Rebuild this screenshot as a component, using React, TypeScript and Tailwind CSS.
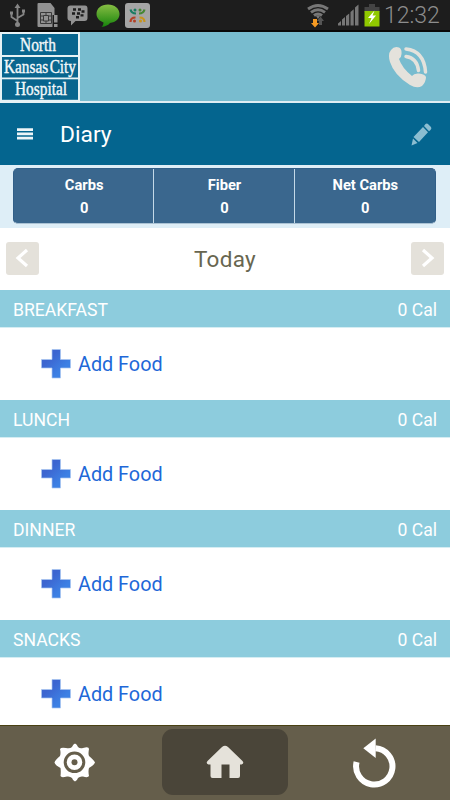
const meals = ["BREAKFAST", "LUNCH", "DINNER", "SNACKS"];

const stats = [
  { label: "Carbs", value: 0 },
  { label: "Fiber", value: 0 },
  { label: "Net Carbs", value: 0 },
];

const StatusBar = () => (
  <div className="flex h-[32px] items-center justify-between border-b-2 border-[#080808] bg-[#1d1d1d] pr-[9px] pl-[9px]">
    <div className="flex items-center">
      <svg width="17" height="26" viewBox="0 0 17 26" fill="none" stroke="#858585" strokeWidth="1.8">
        <path d="M8.5 4v18M8.5 19L2.5 15v-4M8.5 16l6-3.500V9" />
        <path d="M5.500 6L8.500 1.500L11.500 6zM1 9.500h3v3H1zM13 7.500h3v3h-3z" fill="#858585" stroke="none" />
        <circle cx="8.5" cy="22.500" r="2.500" fill="#858585" stroke="none" />
      </svg>
      <svg className="ml-[11px]" width="22" height="26" viewBox="0 0 22 26">
        <path d="M1.500 1h12l4 5v7h-2v12H1.500a1 1 0 0 1-1-1V2a1 1 0 0 1 1-1z" fill="#929292" />
        <path d="M3.500 10.500h11v11h-11zM6.500 13.500h5v5.500h-5zM9 10.500v3M9 19v2.500M3.500 14h3M3.500 18h3M11.500 14h3M11.500 18h3" fill="none" stroke="#3a3a3a" />
        <path d="M17 13h3.500v7.500H17zM17 22h3.500v3H17z" fill="#929292" />
      </svg>
      <svg className="ml-[8px]" width="21" height="22" viewBox="0 0 21 22">
        <path d="M3.500 1.500h14.500q2.500 0 2.500 3v9.500q0 3-3 3H8.500L4 21.500V17Q.5 17 .5 14V4.500q0-3 3-3z" fill="#929292" />
        <path d="M6 5.500h3M11 5.500h3M5 9.500h3M10 9.500h3M14.500 7.500h3M9 13.300h3M13.500 11.400h3" stroke="#1d1d1d" strokeWidth="2.400" />
      </svg>
      <svg className="ml-[8px]" width="24" height="25" viewBox="0 0 24 25">
        <defs>
          <linearGradient id="bubble" x1="0" y1="0" x2="0" y2="1">
            <stop offset="0" stopColor="#87bd43" />
            <stop offset="1" stopColor="#16840c" />
          </linearGradient>
        </defs>
        <path d="M12 1.500C5 1.500 .5 5.500 .5 11c0 4 3 7 7 8.500c0 2-1 3.500-2 4.500c4-.5 7-2 8.500-4c6-.7 9.500-4.500 9.500-9C23.500 5.500 18.500 1.500 12 1.500z" fill="url(#bubble)" />
      </svg>
      <svg className="ml-[5px]" width="25" height="25" viewBox="0 0 25 25">
        <rect width="25" height="25" rx="3" fill="#a5a5a5" />
        <g fill="none" strokeWidth="2.200">
          <path d="M5.500 6.500q1 4 5.500 4" stroke="#187b62" />
          <path d="M19.500 6.500q-1 4-5.500 4" stroke="#468633" />
          <path d="M5.500 19q0-4.500 5-4.500" stroke="#b34025" />
          <path d="M19.500 19q0-4.500-5-4.500" stroke="#c8941c" />
        </g>
        <circle cx="10" cy="7" r="1.500" fill="#187b62" />
        <circle cx="15" cy="7" r="1.500" fill="#468633" />
        <circle cx="9.500" cy="18" r="1.500" fill="#b34025" />
        <circle cx="15.500" cy="18" r="1.500" fill="#c8941c" />
      </svg>
    </div>

    <div className="flex items-center">
      <svg width="22" height="25" viewBox="0 0 22 25">
        <g fill="none" stroke="#777" strokeWidth="2.900">
          <path d="M1 6Q11-1 21 6" />
          <path d="M4 9.300Q11 4 18 9.300" />
          <path d="M7 12.500Q11 9.300 15 12.500" />
        </g>
        <path d="M11 16l-2-3q2-1.500 4 0z" fill="#777" />
        <path d="M6 16h4v4h2l-4 4.500L4 20h2z" fill="#f59a23" />
        <path d="M12 22v-4h-2l3.500-4.500L17 18h-2v4z" fill="#555" />
      </svg>
      <svg className="ml-[8px]" width="22" height="22" viewBox="0 0 22 22" fill="#777">
        <path d="M1 21.500v-2l3-2.500v4.500zM5 21.500v-6l3-2.500v8.500zM9 21.500V12l3.200-2.500v12zM13.500 21.500V8l3.200-2.800v16.300zM18 21.500V3.500L21.500.5v21z" />
      </svg>
      <svg className="ml-[5px]" width="16" height="23" viewBox="0 0 16 23">
        <path d="M5 0h6v3h4.500v5H.5V3H5z" fill="#444" />
        <path d="M.5 7h15v15.500H.5z" fill="#91c900" />
        <path d="M10.500 6.500L4 14h3.500L5 20l7-8.500H8.500z" fill="#fff" />
      </svg>
      <span className="ml-[4px] w-[57px] pt-px text-[23px] leading-[29px] font-light whitespace-nowrap text-[#8d8d8d]">
        12:32
      </span>
    </div>
  </div>
);

const Logo = () => (
  <svg width="80" height="71" viewBox="0 0 80 71">
    <rect width="80" height="71" fill="#e6f2f5" />
    <g fill="#08658e">
      <rect x="2" y="2" width="76" height="21" />
      <rect x="2" y="25" width="76" height="20.500" />
      <rect x="2" y="47.300" width="76" height="20.500" />
    </g>
    <g fill="#f3f8fa" stroke="#f3f8fa" strokeWidth=".4" fontFamily="'Liberation Serif', serif" fontSize="19">
      <text x="20" y="19" textLength="36" lengthAdjust="spacingAndGlyphs">North</text>
      <text x="4" y="41" wordSpacing="-3" textLength="72" lengthAdjust="spacingAndGlyphs">Kansas City</text>
      <text x="15" y="62.500" textLength="52" lengthAdjust="spacingAndGlyphs">Hospital</text>
    </g>
  </svg>
);

const Header = () => (
  <header className="flex h-[71px] items-start justify-between bg-[#78bccf] shadow-[inset_0_-2px_0_#deedf3]">
    <Logo />
    <svg className="mt-[14px] mr-[21px]" width="41" height="43" viewBox="0 0 41 43">
      <path
        d="M3 4Q6 0 11 1.500Q14 3 13.500 8Q13.500 11 11 13Q14 22 24 30Q26 27 31 27.500Q37 28 38 31Q38 36 34 40Q29 43 22 39Q6 29 2 16Q-.5 8 3 4z"
        fill="#e4e2dc"
      />
      <path d="M18 3Q36 5 37.500 26M18 10.500Q29 12 30.500 24.500" fill="none" stroke="#e4e2dc" strokeWidth="3.500" strokeLinecap="round" />
    </svg>
  </header>
);

const TitleBar = () => (
  <div className="flex h-[62px] items-center bg-[#04658f] pr-[18px] pl-[17px]">
    <svg width="16" height="12" viewBox="0 0 16 12" fill="#eef5f8">
      <path d="M0 .3h16v2.700H0zM0 4.500h16v2.700H0zM0 8.700h16v2.700H0z" />
    </svg>
    <h1 className="ml-[27px] flex-1 pt-[2px] text-[22.800px] text-white">Diary</h1>
    <svg width="21" height="23" viewBox="0 0 21 23" fill="#8bbdd1">
      <path d="M14.500 1Q16 0 17.500 1.500L20 4Q21 5.500 19.500 7L18 8.300L13 3zM12 4l5 5.300L8 19L2.500 14zM2 15.500L6.500 20L.5 22.500z" />
    </svg>
  </div>
);

const Stats = () => (
  <div className="h-[63px] bg-[#deeef7] pt-[3px] pr-[14px] pl-[13px]">
    <div className="grid h-[56px] grid-cols-3 divide-x divide-[#c3d9e8] overflow-hidden rounded-[5px] border border-[#315f88] border-b-[#abc3d5] bg-[#3a678e]">
      {stats.map((stat) => (
        <div key={stat.label} className="pt-[5px] pl-px text-center text-[14.700px] leading-[23px] font-bold text-white">
          <div>{stat.label}</div>
          <div>{stat.value}</div>
        </div>
      ))}
    </div>
  </div>
);

const DayButton = ({ d }: { d: string }) => (
  <button className="flex h-[33px] w-[33px] items-center justify-center rounded-[3px] bg-[#e4e1da]">
    <svg width="33" height="33" viewBox="0 0 33 33" fill="none" stroke="#fff" strokeWidth="3.200">
      <path d={d} />
    </svg>
  </button>
);

const DayPicker = () => (
  <div className="flex h-[62px] items-center justify-between px-[6px] pb-[2px]">
    <DayButton d="M21 8L12 16L21 24" />
    <span className="pt-[4px] text-[22.500px] tracking-[0.3px] text-[#686650]">Today</span>
    <DayButton d="M12 8L21 16L12 24" />
  </div>
);

const Meal = ({ name }: { name: string }) => (
  <section>
    <div className="flex h-[37px] items-center justify-between bg-[#8dccdd] px-[13px] pt-[3px] text-[17.600px] text-white">
      <span>{name}</span>
      <span>0 Cal</span>
    </div>
    <div className="flex h-[73px] items-center border-t border-[#d5edf3] pl-[41px]">
      <svg width="30" height="30" viewBox="0 0 30 30">
        <defs>
          <linearGradient id="plus" x1="0" y1="0" x2="1" y2="1">
            <stop offset="0.300" stopColor="#3c65d0" />
            <stop offset="0.700" stopColor="#3d80e4" />
          </linearGradient>
        </defs>
        <path d="M11 .5h8.500v10h10v8.500h-10v10H11v-10H.5v-8.500H11z" fill="url(#plus)" stroke="#a9c5f0" strokeWidth=".7" />
      </svg>
      <span className="ml-[7px] pt-[2px] text-[19.800px] text-[#2167d8]">Add Food</span>
    </div>
  </section>
);

const BottomNav = () => (
  <nav className="grid h-[75px] shrink-0 grid-cols-[162px_126px_162px] items-start border-t border-[#494113] bg-[#655e4b] pt-[3px]">
    <svg className="mt-[14px] ml-[54px]" width="42" height="39" viewBox="0 0 42 39">
      <path
        d="M21 .5Q23 1 24 4Q26 6 29 5Q35 3 35 6Q34 11 35 13Q40 17 41 19.500Q40 22 35 25Q34 28 35 33Q34 35 29 33.500Q26 33 24 35Q23 38 21 38.500Q19 38 18 35Q16 33 13 33.500Q7 35 6.500 33Q7 28 6.500 25Q1 22 .5 19.500Q1 17 6 13Q7 10 6 6Q7 4 12 5Q16 6 18 4Q19 1 21 .5z"
        fill="#fff"
      />
      <circle cx="20.500" cy="19.300" r="9.300" fill="none" stroke="#655e4b" strokeWidth="3" />
      <circle cx="20.500" cy="19.300" r="3" fill="#655e4b" />
    </svg>
    <div className="flex h-[66px] items-center justify-center rounded-[11px] bg-[#4a4539]">
      <svg width="38" height="34" viewBox="0 0 38 34">
        <path
          d="M16 2Q19-.5 22 2L36.500 16Q38.500 18.500 35.500 19.500H34V31Q34 33 32 33H23.500V19.500H15.500V33H6.500Q4.500 33 4.500 31V19.500H2.500Q-.5 18.500 1.500 16z"
          fill="#e5e2da"
        />
      </svg>
    </div>
    <svg className="mt-[8px] ml-[64px]" width="46" height="52" viewBox="0 0 46 52">
      <path d="M23.500 11.200A18.200 18.200 0 1 1 4.600 25" fill="none" stroke="#fff" strokeWidth="6" />
      <path d="M11.300 11.300L23.700 1.500V21z" fill="#fff" />
    </svg>
  </nav>
);

const App = () => {
  return (
    <div className="flex h-[800px] w-[450px] flex-col overflow-hidden bg-white font-['Roboto',sans-serif]">
      <StatusBar />
      <Header />
      <TitleBar />
      <Stats />
      <DayPicker />
      <main className="min-h-0 flex-1 overflow-hidden">
        {meals.map((meal) => (
          <Meal key={meal} name={meal} />
        ))}
      </main>
      <BottomNav />
    </div>
  );
};

export default App;
